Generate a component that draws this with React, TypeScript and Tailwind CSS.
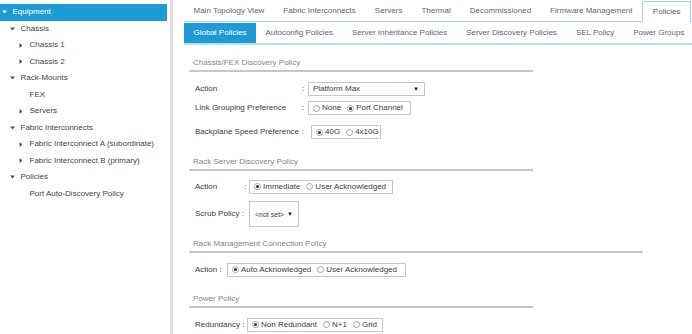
import React from "react";

type TreeItem = {
  label: string;
  level: 0 | 1 | 2;
  arrow: "down" | "right" | null;
  active?: boolean;
};

const TREE: TreeItem[] = [
  { label: "Equipment", level: 0, arrow: "down", active: true },
  { label: "Chassis", level: 1, arrow: "down" },
  { label: "Chassis 1", level: 2, arrow: "right" },
  { label: "Chassis 2", level: 2, arrow: "right" },
  { label: "Rack-Mounts", level: 1, arrow: "down" },
  { label: "FEX", level: 2, arrow: null },
  { label: "Servers", level: 2, arrow: "right" },
  { label: "Fabric Interconnects", level: 1, arrow: "down" },
  { label: "Fabric Interconnect A (subordinate)", level: 2, arrow: "right" },
  { label: "Fabric Interconnect B (primary)", level: 2, arrow: "right" },
  { label: "Policies", level: 1, arrow: "down" },
  { label: "Port Auto-Discovery Policy", level: 2, arrow: null },
];

const INDENT = ["pl-[1px]", "pl-[9px]", "pl-[18px]"];

const TOP_TABS = [
  "Main Topology View",
  "Fabric Interconnects",
  "Servers",
  "Thermal",
  "Decommissioned",
  "Firmware Management",
  "Policies",
];

const SUB_TABS = [
  "Global Policies",
  "Autoconfig Policies",
  "Server Inheritance Policies",
  "Server Discovery Policies",
  "SEL Policy",
  "Power Groups",
];

function Arrow({ dir, color }: { dir: "down" | "right"; color: string }) {
  return dir === "down" ? (
    <svg width="5" height="4" viewBox="0 0 5 4">
      <path d="M0 0.5 H5 L2.5 3.5 Z" fill={color} />
    </svg>
  ) : (
    <svg width="4" height="5" viewBox="0 0 4 5">
      <path d="M0.5 0 V5 L3.5 2.5 Z" fill={color} />
    </svg>
  );
}

function Radio({ checked }: { checked?: boolean }) {
  return (
    <span className="flex h-[7px] w-[7px] shrink-0 items-center justify-center rounded-full border border-[#a5a5a5] bg-white">
      {checked && <span className="h-[3px] w-[3px] rounded-full bg-[#333]"></span>}
    </span>
  );
}

function RadioGroup({
  options,
  checked,
  width,
}: {
  options: string[];
  checked: number;
  width: string;
}) {
  return (
    <div
      className={`flex h-[14px] items-center gap-[6px] border border-[#c8c8c8] bg-white pl-[4px] ${width}`}
    >
      {options.map((opt, i) => (
        <div key={opt} className="flex items-center gap-[2px]">
          <Radio checked={i === checked} />
          <span>{opt}</span>
        </div>
      ))}
    </div>
  );
}

function SectionHeading({ title, wide }: { title: string; wide?: boolean }) {
  return (
    <div>
      <div className="flex h-[14px] items-center pl-[4px] text-[#858585]">{title}</div>
      <div className={`h-[2px] bg-[#c6c6c6] ${wide ? "w-[454px]" : "w-[344px]"}`}></div>
    </div>
  );
}

export default function App() {
  return (
    <div className="flex h-[334px] w-[692px] overflow-hidden bg-white font-['Liberation_Sans',Arial,sans-serif] text-[8px] leading-none text-[#3c3c3c]">
      {/* Arbre de navigation */}
      <div className="w-[170px] shrink-0 pr-[3px] pt-[4px]">
        {TREE.map((item) => (
          <div
            key={item.label}
            className={`flex h-[16.5px] items-center ${INDENT[item.level]} ${
              item.active ? "bg-[#1d9bd7] text-white" : "text-[#444]"
            }`}
          >
            <span className="flex w-[11.5px] shrink-0 items-center pl-[1px]">
              {item.arrow && <Arrow dir={item.arrow} color={item.active ? "#fff" : "#555"} />}
            </span>
            <span className="whitespace-nowrap">{item.label}</span>
          </div>
        ))}
      </div>
      <div className="w-[3px] shrink-0 bg-[#dedede]"></div>

      {/* Contenu */}
      <div className="min-w-0 flex-1">
        <div className="ml-[11px] flex h-[22px] items-end border-b border-[#a9d5df] text-[#666]">
          {TOP_TABS.map((tab) =>
            tab === "Policies" ? (
              <div
                key={tab}
                className="-mb-px flex h-[21px] items-center border border-b-0 border-[#a9d5df] bg-white px-[10px] whitespace-nowrap"
              >
                {tab}
              </div>
            ) : (
              <div key={tab} className="flex h-[20px] items-center px-[9.5px] whitespace-nowrap">
                {tab}
              </div>
            )
          )}
        </div>
        <div className="ml-[11px] flex h-[23px] border-b-2 border-[#b5dfe8] pt-px text-[#666]">
          {SUB_TABS.map((tab, i) => (
            <div
              key={tab}
              className={`flex items-center px-[9.5px] whitespace-nowrap ${
                i === 0 ? "bg-[#1d9bd7] text-white" : ""
              }`}
            >
              {tab}
            </div>
          ))}
        </div>

        <div className="ml-[16px]">
          {/* Chassis/FEX */}
          <div className="mt-[11px]">
            <SectionHeading title="Chassis/FEX Discovery Policy" />
          </div>
          <div className="mt-[10px] flex h-[14px] items-center pl-[6px]">
            <span className="w-[107px]">Action</span>
            <span className="w-[6px]">:</span>
            <div className="flex h-[14px] w-[117px] items-center justify-between border border-[#c8c8c8] bg-white pl-[4px] pr-[5px]">
              <span>Platform Max</span>
              <span className="text-[6px] text-[#222]">▼</span>
            </div>
          </div>
          <div className="mt-[5px] flex h-[14px] items-center pl-[6px]">
            <span className="w-[107px]">Link Grouping Preference</span>
            <span className="w-[6px]">:</span>
            <RadioGroup options={["None", "Port Channel"]} checked={1} width="w-[103px]" />
          </div>
          <div className="mt-[10px] flex h-[14px] items-center pl-[6px]">
            <span className="w-[116px] whitespace-nowrap">Backplane Speed Preference :</span>
            <RadioGroup options={["40G", "4x10G"]} checked={0} width="w-[70px]" />
          </div>

          {/* Rack Server Discovery */}
          <div className="mt-[16px]">
            <SectionHeading title="Rack Server Discovery Policy" />
          </div>
          <div className="mt-[8px] flex h-[15px] items-center pl-[6px]">
            <span className="w-[49px]">Action</span>
            <span className="w-[5px]">:</span>
            <RadioGroup options={["Immediate", "User Acknowledged"]} checked={0} width="w-[144px]" />
          </div>
          <div className="mt-[7px] flex h-[26px] items-center pl-[6px]">
            <span className="w-[54px] whitespace-nowrap">Scrub Policy :</span>
            <div className="flex h-[26px] w-[50px] items-center justify-between border border-[#c8c8c8] bg-white pl-[5px] pr-[5px]">
              <span className="text-[7px]">&lt;not set&gt;</span>
              <span className="text-[6px] text-[#222]">▼</span>
            </div>
          </div>

          {/* Rack Management Connection */}
          <div className="mt-[10px]">
            <SectionHeading title="Rack Management Connection Policy" wide />
          </div>
          <div className="mt-[10px] flex h-[13px] items-center pl-[6px]">
            <span className="w-[32px] whitespace-nowrap">Action :</span>
            <RadioGroup
              options={["Auto Acknowledged", "User Acknowledged"]}
              checked={0}
              width="w-[179px]"
            />
          </div>

          {/* Power Policy */}
          <div className="mt-[16px]">
            <SectionHeading title="Power Policy" />
          </div>
          <div className="mt-[10px] flex h-[13px] items-center pl-[6px]">
            <span className="w-[52px] whitespace-nowrap">Redundancy :</span>
            <RadioGroup options={["Non Redundant", "N+1", "Grid"]} checked={0} width="w-[136px]" />
          </div>
        </div>
      </div>
    </div>
  );
}
